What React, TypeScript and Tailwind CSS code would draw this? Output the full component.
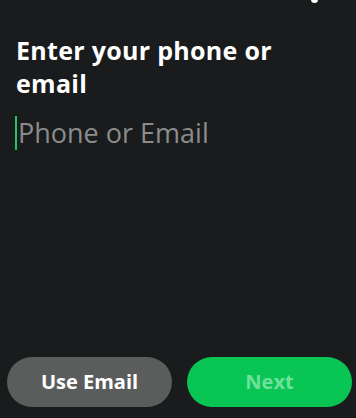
export default function App() {
  return (
    <div
      className="relative w-[356px] h-[418px] bg-[#1a1b1c] flex flex-col overflow-hidden"
      style={{ fontFamily: '"Open Sans", "Liberation Sans", sans-serif' }}
    >
      {/* top status dot */}
      <div className="absolute left-[311px] top-[-4px] w-[7px] h-[7px] rounded-full bg-white" />

      <div className="px-4 pt-[34px]">
        <h1 className="max-w-[300px] text-[25px] leading-[33px] font-bold text-white tracking-[0.3px]">
          Enter your phone or email
        </h1>
        <div className="mt-[16px] flex items-center h-[34px]">
          <div className="w-[2px] h-[34px] bg-[#1ec760] -ml-[1px] shrink-0" />
          <input
            type="text"
            placeholder="Phone or Email"
            className="ml-[1px] bg-transparent outline-none text-[27px] text-white placeholder:text-[#8b8c8c] w-full"
          />
        </div>
      </div>

      <div className="flex-1" />

      <div className="flex gap-[15px] pl-[7px] pr-[4px] pb-[11px]">
        <button className="flex-1 h-[50px] rounded-full bg-[#5b5c5c] text-white text-[20px] font-bold">
          Use Email
        </button>
        <button className="flex-1 h-[50px] rounded-full bg-[#09c553] text-[#6fe09c] text-[20px] font-bold">
          Next
        </button>
      </div>
    </div>
  );
}
